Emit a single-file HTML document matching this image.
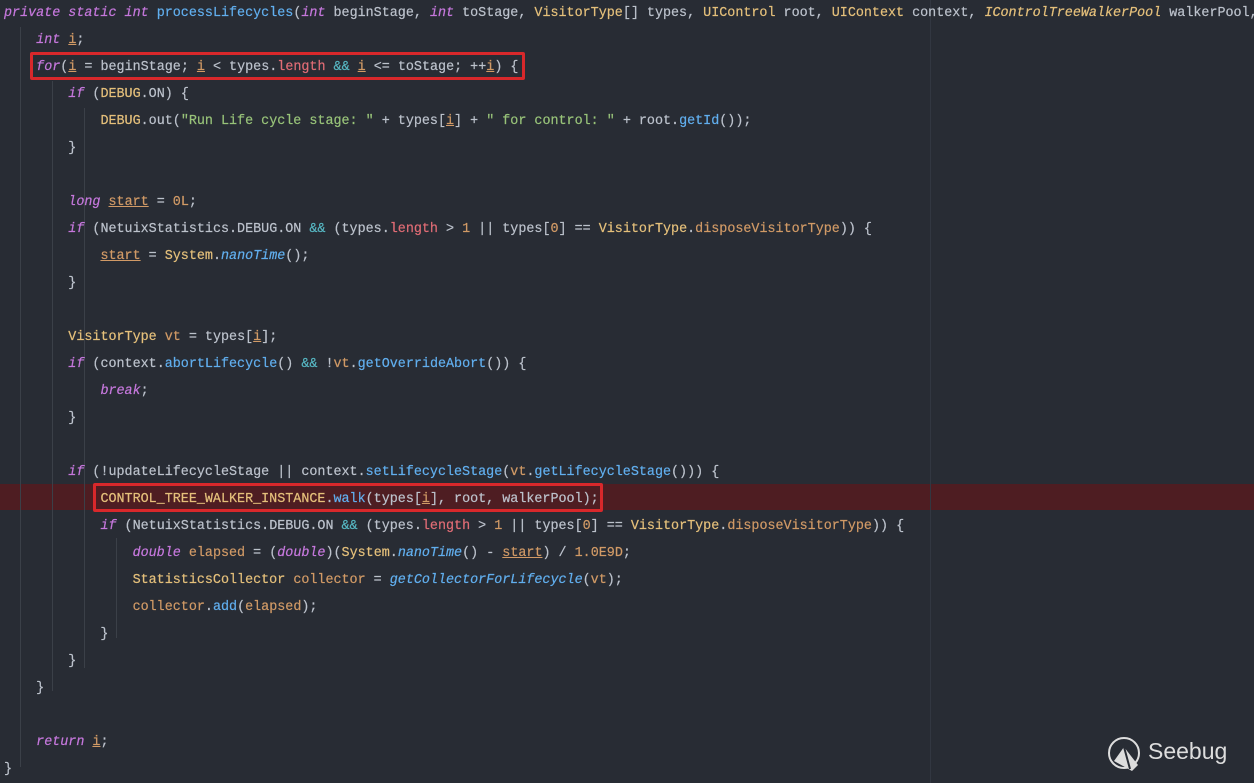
<!DOCTYPE html>
<html><head><meta charset="utf-8"><style>
html,body{margin:0;padding:0;background:#282c34;width:1254px;height:783px;overflow:hidden}
#c{position:absolute;left:4px;top:0px;font-family:"Liberation Mono",monospace;font-size:13.4px;line-height:27px;color:#bcc2cc;white-space:pre;-webkit-text-stroke:0.2px}
.k{color:#c678dd;font-style:italic}
.f{color:#61afef}
.fi{color:#61afef;font-style:italic}
.t{color:#e5c07b}
.v{color:#d19a66;text-decoration:underline}
.r{color:#e06c75}
.o{color:#56b6c2}
.s{color:#98c379}
.n{color:#d19a66}
.p{color:#d19a66}
.g{position:absolute;top:27px;width:1px;background:#3b4048}
.hl{position:absolute;left:0;top:484px;width:1254px;height:26px;background:#4e1d22}
.box{position:absolute;border:3px solid #d8282b;border-radius:2px;box-sizing:border-box}
</style></head><body>
<div class="hl"></div>
<div class="g" style="left:20px;height:740px"></div>
<div class="g" style="left:52px;top:81px;height:610px"></div>
<div class="g" style="left:84px;top:108px;height:560px"></div>
<div class="g" style="left:116px;top:538px;height:100px"></div>
<div class="g" style="left:930px;top:0;height:783px;background:#323741"></div>
<div id="c"><span class="k">private static int</span> <span class="f">processLifecycles</span>(<span class="k">int</span> beginStage, <span class="k">int</span> toStage, <span class="t">VisitorType</span>[] types, <span class="t">UIControl</span> root, <span class="t">UIContext</span> context, <span class="t" style="font-style:italic">IControlTreeWalkerPool</span> walkerPool,
    <span class="k">int</span> <span class="v">i</span>;
    <span class="k">for</span>(<span class="v">i</span> = beginStage; <span class="v">i</span> &lt; types.<span class="r">length</span> <span class="o">&amp;&amp;</span> <span class="v">i</span> &lt;= toStage; ++<span class="v">i</span>) {
        <span class="k">if</span> (<span class="t">DEBUG</span>.ON) {
            <span class="t">DEBUG</span>.out(<span class="s">"Run Life cycle stage: "</span> + types[<span class="v">i</span>] + <span class="s">" for control: "</span> + root.<span class="f">getId</span>());
        }

        <span class="k">long</span> <span class="v">start</span> = <span class="n">0L</span>;
        <span class="k">if</span> (NetuixStatistics.DEBUG.ON <span class="o">&amp;&amp;</span> (types.<span class="r">length</span> &gt; <span class="n">1</span> || types[<span class="n">0</span>] == <span class="t">VisitorType</span>.<span class="p">disposeVisitorType</span>)) {
            <span class="v">start</span> = <span class="t">System</span>.<span class="fi">nanoTime</span>();
        }

        <span class="t">VisitorType</span> <span class="p">vt</span> = types[<span class="v">i</span>];
        <span class="k">if</span> (context.<span class="f">abortLifecycle</span>() <span class="o">&amp;&amp;</span> !<span class="p">vt</span>.<span class="f">getOverrideAbort</span>()) {
            <span class="k">break</span>;
        }

        <span class="k">if</span> (!updateLifecycleStage || context.<span class="f">setLifecycleStage</span>(<span class="p">vt</span>.<span class="f">getLifecycleStage</span>())) {
            <span class="t">CONTROL_TREE_WALKER_INSTANCE</span>.<span class="f">walk</span>(types[<span class="v">i</span>], root, walkerPool);
            <span class="k">if</span> (NetuixStatistics.DEBUG.ON <span class="o">&amp;&amp;</span> (types.<span class="r">length</span> &gt; <span class="n">1</span> || types[<span class="n">0</span>] == <span class="t">VisitorType</span>.<span class="p">disposeVisitorType</span>)) {
                <span class="k">double</span> <span class="p">elapsed</span> = (<span class="k">double</span>)(<span class="t">System</span>.<span class="fi">nanoTime</span>() - <span class="v">start</span>) / <span class="n">1.0E9D</span>;
                <span class="t">StatisticsCollector</span> <span class="p">collector</span> = <span class="fi">getCollectorForLifecycle</span>(<span class="p">vt</span>);
                <span class="p">collector</span>.<span class="f">add</span>(<span class="p">elapsed</span>);
            }
        }
    }

    <span class="k">return</span> <span class="v">i</span>;
}</div>
<div class="box" style="left:30px;top:52px;width:495px;height:28px"></div>
<div class="box" style="left:93px;top:483px;width:510px;height:29px"></div>
<svg style="position:absolute;left:1106px;top:735px" width="40" height="40" viewBox="0 0 40 40">
<circle cx="18" cy="18" r="15" fill="none" stroke="#ddd" stroke-width="2"/>
<path d="M8 26 L18 12 L32 30 L26 36 Z" fill="#ddd"/>
<path d="M18 12 L24 34" stroke="#282c34" stroke-width="2"/>
</svg>
<div style="position:absolute;left:1148px;top:738px;font-family:'Liberation Sans',sans-serif;font-size:23px;color:#ddd">Seebug</div>
</body></html>
